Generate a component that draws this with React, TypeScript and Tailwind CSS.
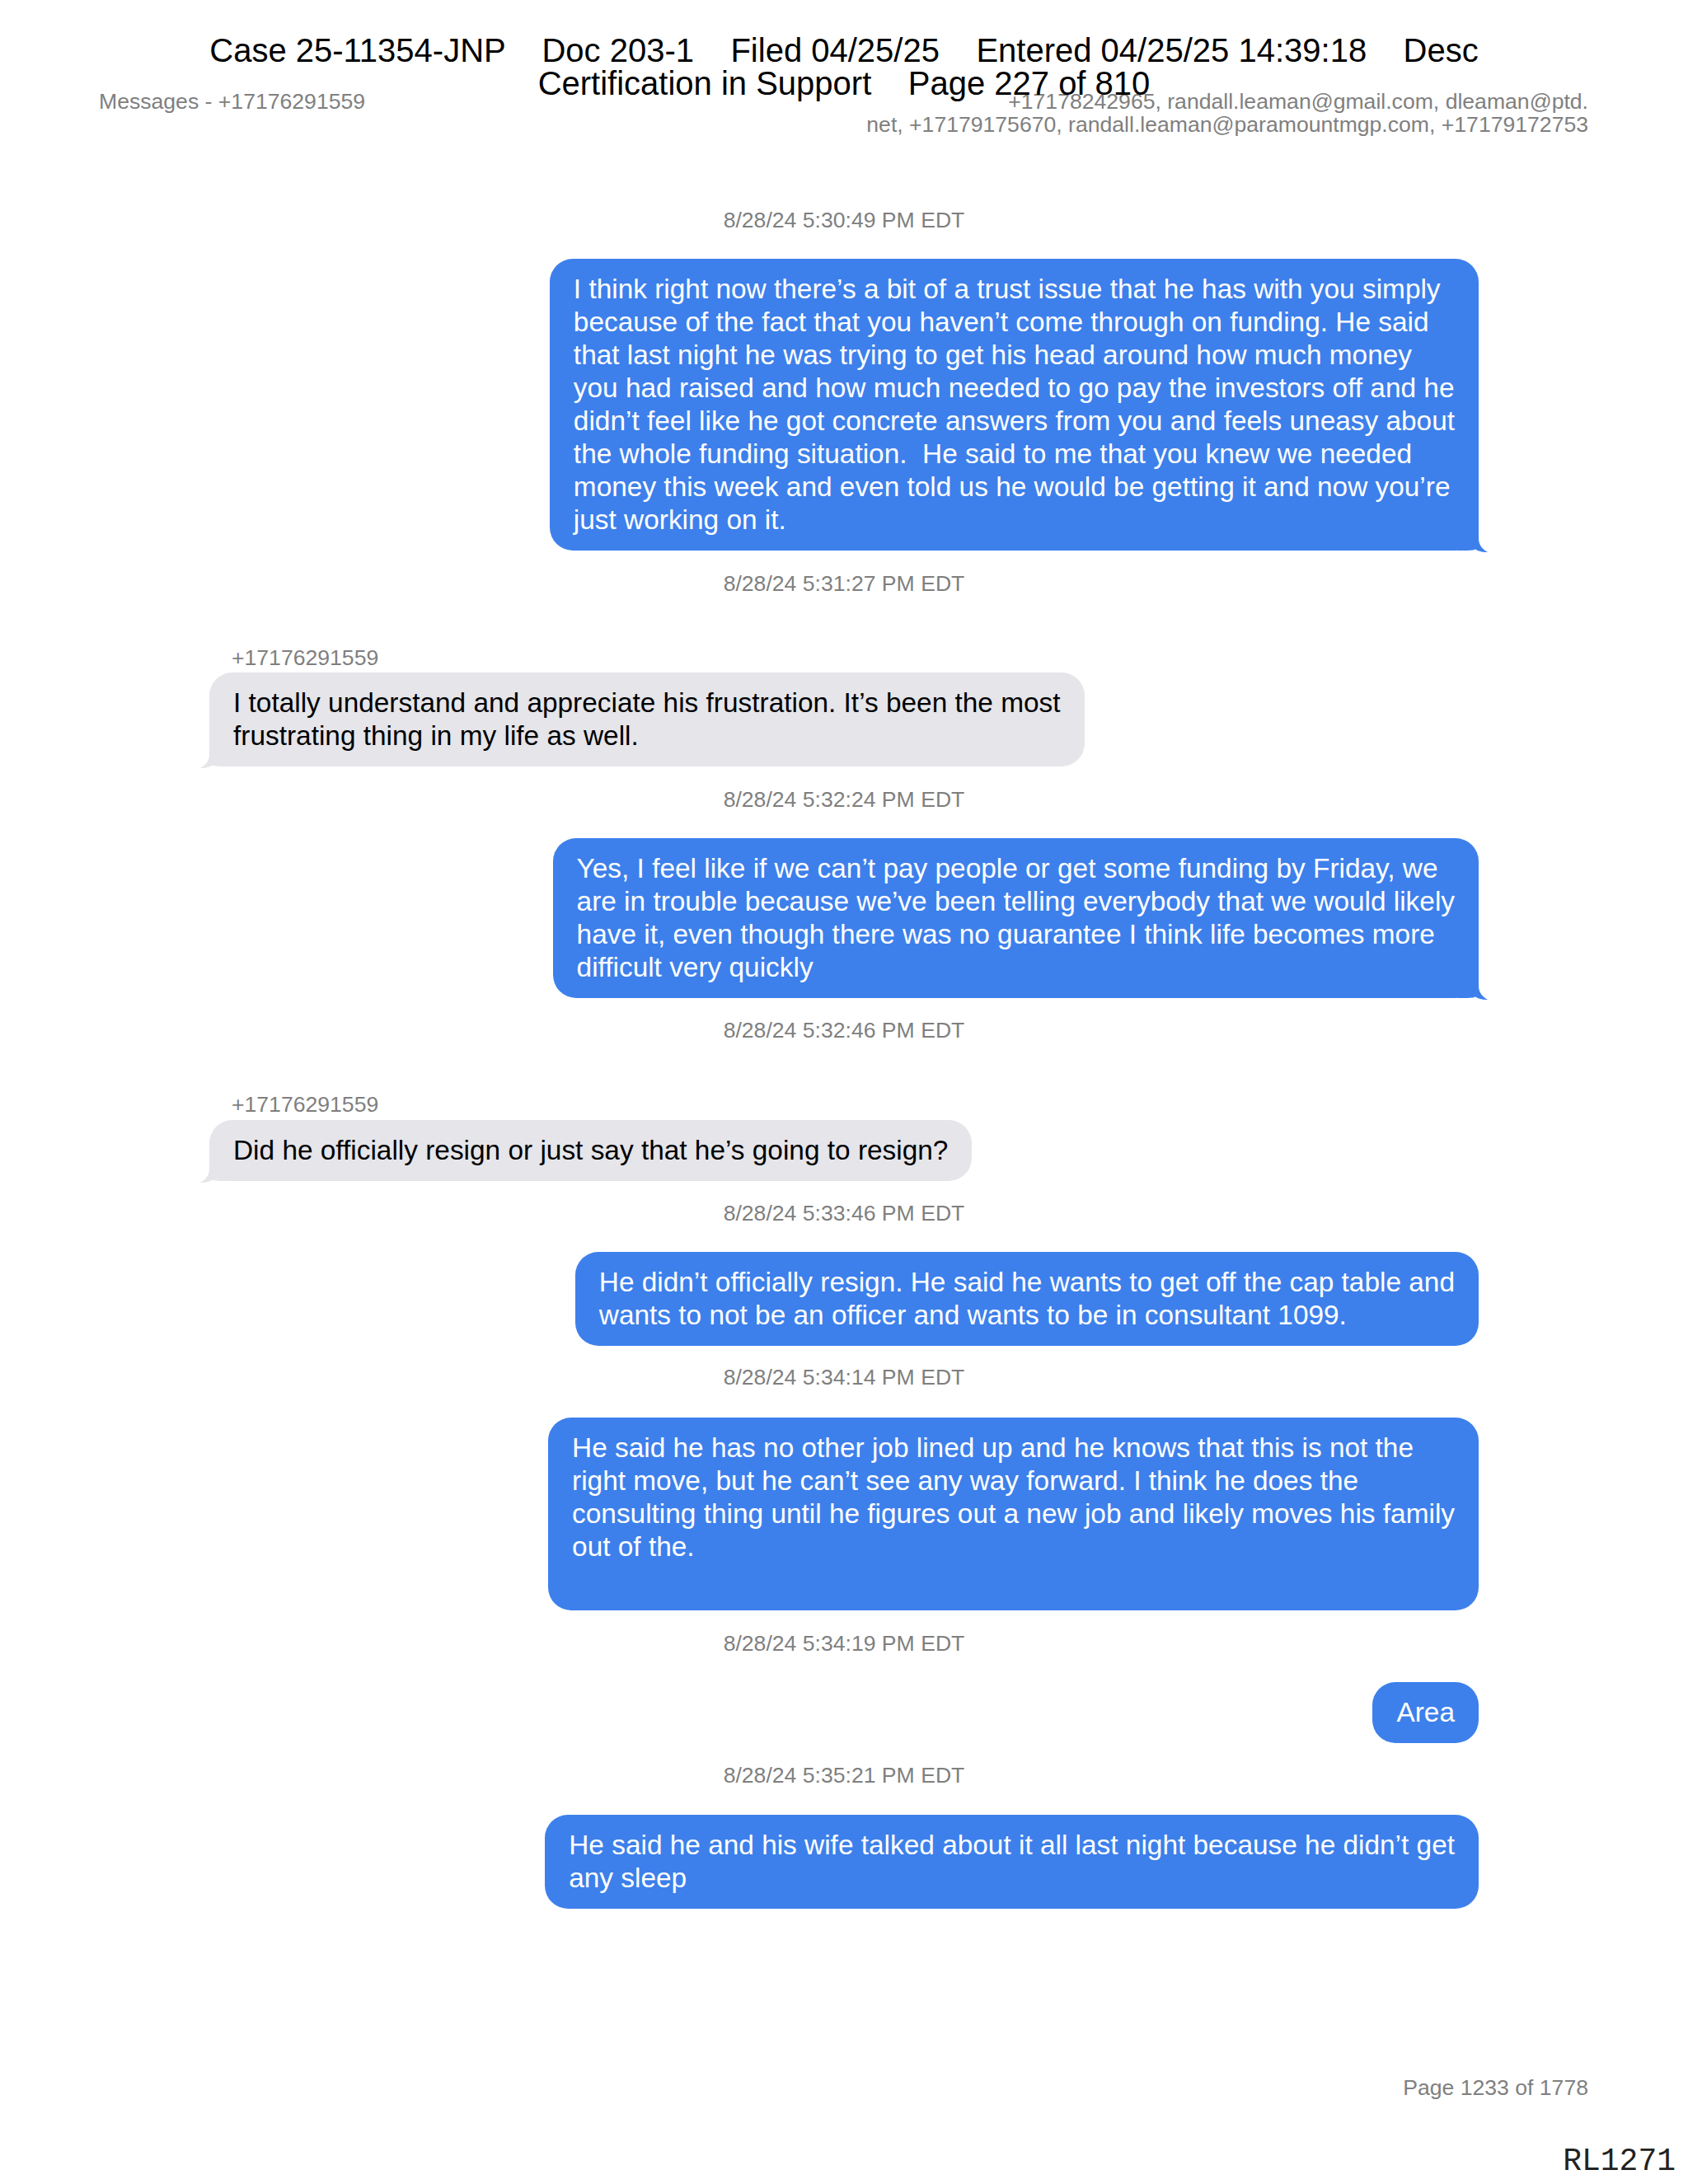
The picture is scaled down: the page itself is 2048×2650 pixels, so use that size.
import { FC } from "react";

type Msg =
  | { kind: "time"; text: string; mt: string }
  | { kind: "label"; text: string; mt: string }
  | { kind: "sent" | "recv"; lines: string[]; mt: string; tail?: boolean };

const items: Msg[] = [
  { kind: "time", text: "8/28/24 5:30:49 PM EDT", mt: "mt-[86px]" },
  {
    kind: "sent",
    mt: "mt-[31px]",
    tail: true,
    lines: [
      "I think right now there’s a bit of a trust issue that he has with you simply",
      "because of the fact that you haven’t come through on funding. He said",
      "that last night he was trying to get his head around how much money",
      "you had raised and how much needed to go pay the investors off and he",
      "didn’t feel like he got concrete answers from you and feels uneasy about",
      "the whole funding situation.  He said to me that you knew we needed",
      "money this week and even told us he would be getting it and now you’re",
      "just working on it.",
    ],
  },
  { kind: "time", text: "8/28/24 5:31:27 PM EDT", mt: "mt-[24px]" },
  { kind: "label", text: "+17176291559", mt: "mt-[58px]" },
  {
    kind: "recv",
    mt: "mt-[2px]",
    tail: true,
    lines: [
      "I totally understand and appreciate his frustration. It’s been the most",
      "frustrating thing in my life as well.",
    ],
  },
  { kind: "time", text: "8/28/24 5:32:24 PM EDT", mt: "mt-[24px]" },
  {
    kind: "sent",
    mt: "mt-[31px]",
    tail: true,
    lines: [
      "Yes, I feel like if we can’t pay people or get some funding by Friday, we",
      "are in trouble because we’ve been telling everybody that we would likely",
      "have it, even though there was no guarantee I think life becomes more",
      "difficult very quickly",
    ],
  },
  { kind: "time", text: "8/28/24 5:32:46 PM EDT", mt: "mt-[23px]" },
  { kind: "label", text: "+17176291559", mt: "mt-[58px]" },
  {
    kind: "recv",
    mt: "mt-[3px]",
    tail: true,
    lines: ["Did he officially resign or just say that he’s going to resign?"],
  },
  { kind: "time", text: "8/28/24 5:33:46 PM EDT", mt: "mt-[23px]" },
  {
    kind: "sent",
    mt: "mt-[31px]",
    lines: [
      "He didn’t officially resign. He said he wants to get off the cap table and",
      "wants to not be an officer and wants to be in consultant 1099.",
    ],
  },
  { kind: "time", text: "8/28/24 5:34:14 PM EDT", mt: "mt-[22px]" },
  {
    kind: "sent",
    mt: "mt-[33px]",
    lines: [
      "He said he has no other job lined up and he knows that this is not the",
      "right move, but he can’t see any way forward. I think he does the",
      "consulting thing until he figures out a new job and likely moves his family",
      "out of the.",
      " ",
    ],
  },
  { kind: "time", text: "8/28/24 5:34:19 PM EDT", mt: "mt-[24px]" },
  { kind: "sent", mt: "mt-[31px]", lines: ["Area"] },
  { kind: "time", text: "8/28/24 5:35:21 PM EDT", mt: "mt-[23px]" },
  {
    kind: "sent",
    mt: "mt-[32px]",
    lines: [
      "He said he and his wife talked about it all last night because he didn’t get",
      "any sleep",
    ],
  },
];

const Tail: FC<{ left?: boolean; fill: string }> = ({ left, fill }) =>
  left ? (
    <svg width="40" height="40" viewBox="0 0 40 40" className="absolute bottom-[-3px] left-[-14px]">
      <path d="M14 4 L14 22 C14 30 10 35 3 39 C9 39.5 14 38 18 35.5 C21 37 25 37 40 37 L40 4 Z" fill={fill} />
    </svg>
  ) : (
    <svg width="40" height="40" viewBox="0 0 40 40" className="absolute bottom-[-3px] right-[-14px]">
      <path d="M26 4 L26 22 C26 30 30 35 37 39 C31 39.5 26 38 22 35.5 C19 37 15 37 0 37 L0 4 Z" fill={fill} />
    </svg>
  );

const Row: FC<{ m: Msg }> = ({ m }) => {
  if (m.kind === "time")
    return (
      <div className={`${m.mt} h-8 text-center text-[26.6px] leading-8 text-[#7f7f7f]`}>{m.text}</div>
    );
  if (m.kind === "label")
    return <div className={`${m.mt} h-8 pl-[27px] text-[26.6px] leading-8 text-[#7f7f7f]`}>{m.text}</div>;
  const sent = m.kind === "sent";
  return (
    <div
      className={`${m.mt} relative rounded-[28px] px-[29px] py-[17px] text-[33.4px] leading-[40px] ${
        sent ? "self-end bg-[#3d80eb] text-white" : "self-start bg-[#e5e5ea] text-black"
      }`}
    >
      {m.lines.map((l, i) => (
        <div key={i} className="whitespace-pre">
          {l}
        </div>
      ))}
      {m.tail && <Tail left={!sent} fill={sent ? "#3d80eb" : "#e5e5ea"} />}
    </div>
  );
};

const App: FC = () => {
  return (
    <div className="relative flex h-[2650px] w-[2048px] flex-col bg-white font-['Liberation_Sans',Arial,sans-serif]">
      {/* court filing stamp laid over the page */}
      <div className="absolute left-0 right-0 top-[41px] z-10 whitespace-pre text-center text-[40px] leading-[40px] text-black">
        <div>Case 25-11354-JNP    Doc 203-1    Filed 04/25/25    Entered 04/25/25 14:39:18    Desc</div>
        <div>Certification in Support    Page 227 of 810</div>
      </div>

      <div className="flex justify-between pl-[120px] pr-[121px] pt-[109px] text-[26.6px] leading-[28px] text-[#808080]">
        <div>Messages - +17176291559</div>
        <div className="text-right">
          <div>+17178242965, randall.leaman@gmail.com, dleaman@ptd.</div>
          <div>net, +17179175670, randall.leaman@paramountmgp.com, +17179172753</div>
        </div>
      </div>

      <div className="mx-auto flex w-[1540px] flex-col">
        {items.map((m, i) => (
          <Row key={i} m={m} />
        ))}
      </div>

      <div className="mt-auto flex flex-col items-end pb-[5px]">
        <div className="pr-[121px] text-[26.6px] leading-8 text-[#808080]">Page 1233 of 1778</div>
        <div className="mt-[52px] pr-[15px] font-['Liberation_Mono',monospace] text-[38px] leading-[44px] text-[#222]">
          RL1271
        </div>
      </div>
    </div>
  );
};

export default App;
